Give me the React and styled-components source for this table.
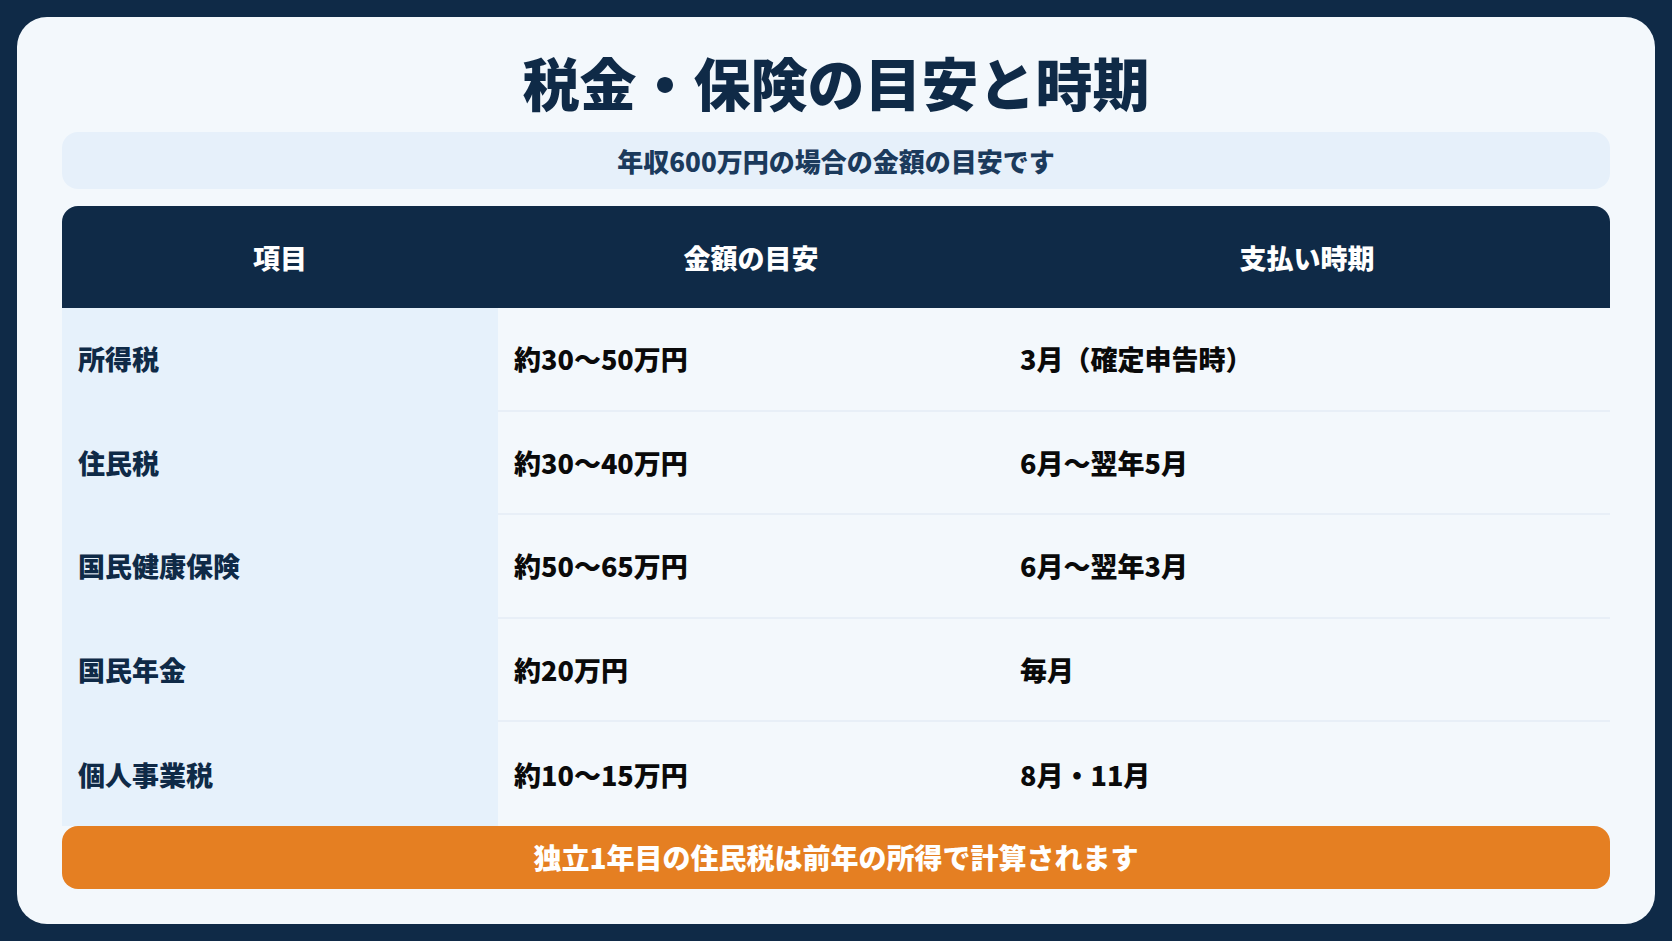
import styled, { createGlobalStyle } from 'styled-components';

const GlobalStyle = createGlobalStyle`
	html, body {
		margin: 0;
		padding: 0;
		background: #0f2a47;
	}
	body {
		font-family: "Noto Sans CJK JP", "Noto Sans", sans-serif;
	}
`;

const Page = styled.div`
	width: 1672px;
	height: 941px;
	box-sizing: border-box;
	padding: 17px;
	background: #0f2a47;
`;

const Card = styled.div`
	height: 100%;
	box-sizing: border-box;
	padding: 31px 45px 34px;
	background: #f3f8fc;
	border-radius: 30px;
	display: flex;
	flex-direction: column;
`;

const Title = styled.h1`
	margin: 0;
	height: 67px;
	line-height: 67px;
	text-align: center;
	font-size: 57px;
	font-weight: 900;
	color: #0f2a47;
`;

const Note = styled.div`
	margin-top: 17px;
	height: 57px;
	display: flex;
	align-items: center;
	justify-content: center;
	background: #e6f0fa;
	border-radius: 16px;
	font-size: 26px;
	font-weight: 900;
	color: #1b3a5c;
`;

const Table = styled.div`
	margin-top: 17px;
	display: grid;
	grid-template-columns: 436px 506px 1fr;
	border-radius: 16px 16px 0 0;
	overflow: hidden;
`;

const HeadCell = styled.div`
	height: 102px;
	display: flex;
	align-items: center;
	justify-content: center;
	background: #0f2a47;
	color: #fff;
	font-size: 27px;
	font-weight: 900;
`;

const Cell = styled.div`
	height: 103.6px;
	box-sizing: border-box;
	display: flex;
	align-items: center;
	padding: 0 16px;
	font-size: 27px;
	font-weight: 900;
	color: ${(p) => (p.$label ? '#0f2a47' : '#0a0a0a')};
	background: ${(p) => (p.$label ? '#e6f1fb' : '#f3f8fc')};
	border-bottom: ${(p) =>
		p.$last ? 'none' : p.$label ? '2px solid #e6f1fb' : '2px solid #e8eff7'};
`;

const Alert = styled.div`
	height: 63px;
	display: flex;
	align-items: center;
	justify-content: center;
	background: #e57f22;
	border-radius: 16px;
	color: #fff;
	font-size: 28px;
	font-weight: 900;
`;

const rows = [
	['所得税', '約30〜50万円', '3月（確定申告時）'],
	['住民税', '約30〜40万円', '6月〜翌年5月'],
	['国民健康保険', '約50〜65万円', '6月〜翌年3月'],
	['国民年金', '約20万円', '毎月'],
	['個人事業税', '約10〜15万円', '8月・11月'],
];

export default function App() {
	return (
		<>
			<GlobalStyle />
			<Page>
				<Card>
					<Title>税金・保険の目安と時期</Title>
					<Note>年収600万円の場合の金額の目安です</Note>
					<Table>
						<HeadCell>項目</HeadCell>
						<HeadCell>金額の目安</HeadCell>
						<HeadCell>支払い時期</HeadCell>
						{rows.map((row, i) =>
							row.map((text, j) => (
								<Cell
									key={`${i}-${j}`}
									$label={j === 0}
									$last={i === rows.length - 1}
								>
									{text}
								</Cell>
							))
						)}
					</Table>
					<Alert>独立1年目の住民税は前年の所得で計算されます</Alert>
				</Card>
			</Page>
		</>
	);
}
